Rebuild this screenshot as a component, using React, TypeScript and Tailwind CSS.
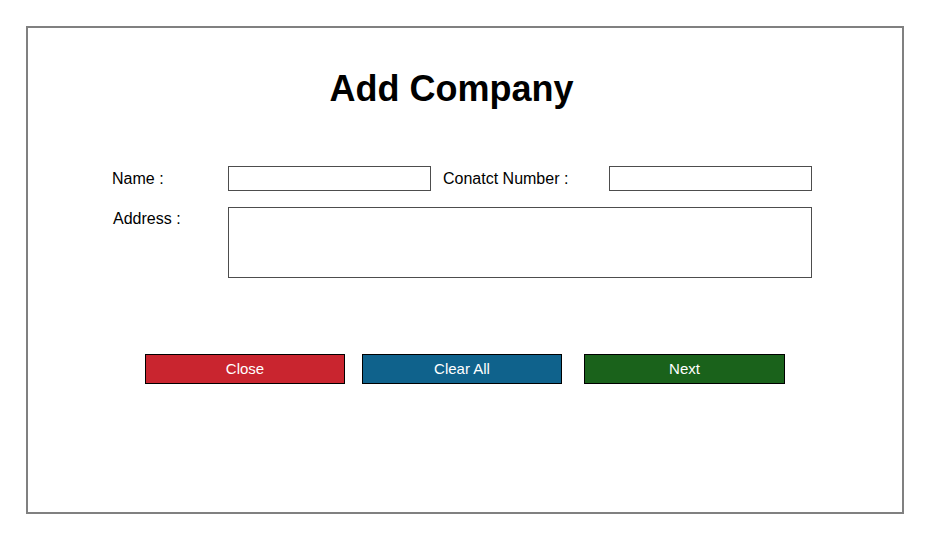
import React from 'react';

function App() {
  return (
    <div className="min-h-screen bg-white pt-[26px] pl-[26px]" style={{ fontFamily: '"Liberation Sans", Arial, sans-serif' }}>
      <div className="w-[878px] h-[488px] border-2 border-[#808080] flex flex-col">
        <h1 className="mt-[40px] pr-[27px] text-center text-[36px] leading-[41px] font-bold text-black">Add Company</h1>

        <div className="mt-[57px] flex items-start pl-[84px]">
          <label className="w-[116px] pt-[4px] text-[16px] leading-[18px] text-black">Name :</label>
          <input type="text" className="w-[203px] h-[25px] border border-[#4d4d4d] bg-white outline-none" />
          <label className="ml-[12px] w-[166px] pt-[4px] text-[16px] leading-[18px] text-black">Conatct Number :</label>
          <input type="text" className="w-[203px] h-[25px] border border-[#4d4d4d] bg-white outline-none" />
        </div>

        <div className="mt-[16px] flex items-start pl-[85px]">
          <label className="w-[115px] pt-[3px] text-[16px] leading-[18px] text-black">Address :</label>
          <textarea className="w-[584px] h-[71px] border border-[#4d4d4d] bg-white resize-none outline-none" />
        </div>

        <div className="mt-[76px] flex pl-[117px]">
          <button className="w-[200px] h-[30px] border border-black bg-[#c9252f] text-white text-[15px]">Close</button>
          <button className="ml-[17px] w-[200px] h-[30px] border border-black bg-[#0f628c] text-white text-[15px]">Clear All</button>
          <button className="ml-[22px] w-[201px] h-[30px] border border-black bg-[#1a621b] text-white text-[15px]">Next</button>
        </div>
      </div>
    </div>
  );
}

export default App;
